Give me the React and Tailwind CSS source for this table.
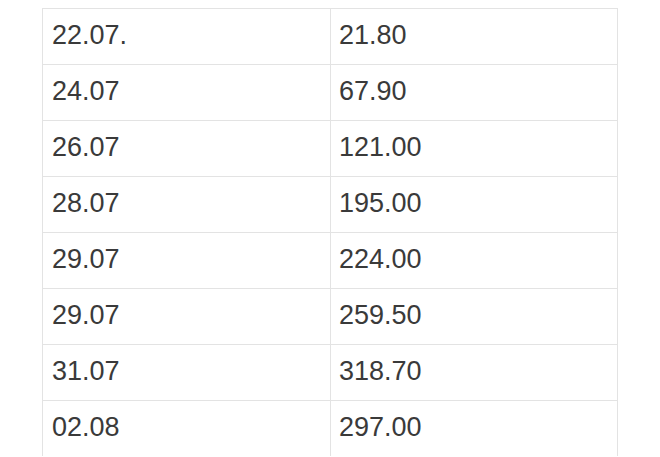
import React from 'react';

const rows = [
  ['22.07.', '21.80'],
  ['24.07', '67.90'],
  ['26.07', '121.00'],
  ['28.07', '195.00'],
  ['29.07', '224.00'],
  ['29.07', '259.50'],
  ['31.07', '318.70'],
  ['02.08', '297.00'],
];

const App = () => {
  return (
    <div className="w-[660px] h-[457px] overflow-hidden bg-white pt-[8px] pl-[42px]">
      <div
        className="w-[576px] border-l border-r border-t border-[#e3e3e3] text-[27px] text-[#3a3a3a]"
        style={{ fontFamily: '"Liberation Sans", Arial, sans-serif' }}
      >
        {rows.map((row, i) => (
          <div
            key={i}
            className={`grid grid-cols-[288px_1fr] ${i < rows.length - 1 ? 'h-[56px] border-b border-[#e3e3e3]' : 'h-[55px]'}`}
          >
            <div className="flex items-center pl-[9px] border-r border-[#e3e3e3] pb-[2px]">{row[0]}</div>
            <div className="flex items-center pl-[8px] pb-[2px]">{row[1]}</div>
          </div>
        ))}
      </div>
    </div>
  );
};

export default App;
